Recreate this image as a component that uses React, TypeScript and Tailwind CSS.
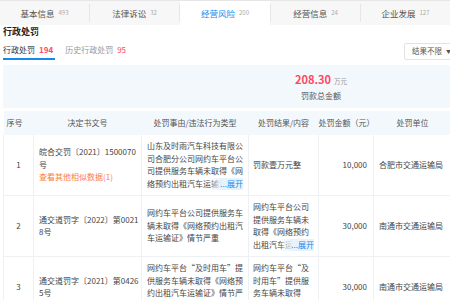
const tabs = [
	{ name: "基本信息", count: 493 },
	{ name: "法律诉讼", count: 32 },
	{ name: "经营风险", count: 200, active: true },
	{ name: "经营信息", count: 24 },
	{ name: "企业发展", count: 127 },
];

type Row = {
	no: number;
	doc: string[];
	similar?: string;
	reason: string;
	reasonMore?: boolean;
	result: string;
	resultMore?: boolean;
	amount: string;
	org: string;
};

const rows: Row[] = [
	{
		no: 1,
		doc: ["皖合交罚〔2021〕1500070", "号"],
		similar: "查看其他相似数据(1)",
		reason:
			"山东及时雨汽车科技有限公司合肥分公司网约车平台公司提供服务车辆未取得《网络预约出租汽车运输证》",
		reasonMore: true,
		result: "罚款壹万元整",
		amount: "10,000",
		org: "合肥市交通运输局",
	},
	{
		no: 2,
		doc: ["通交道罚字〔2022〕第0021", "8号"],
		reason: "网约车平台公司提供服务车辆未取得《网络预约出租汽车运输证》情节严重",
		result: "网约车平台公司提供服务车辆未取得《网络预约出租汽车运输证》情节严重",
		resultMore: true,
		amount: "30,000",
		org: "南通市交通运输局",
	},
	{
		no: 3,
		doc: ["通交道罚字〔2021〕第0426", "5号"],
		reason:
			"网约车平台“及时用车”提供服务车辆未取得《网络预约出租汽车运输证》情节严重",
		reasonMore: true,
		result:
			"网约车平台“及时用车”提供服务车辆未取得《网络预约出租汽车运输证》情节严重",
		resultMore: true,
		amount: "30,000",
		org: "南通市交通运输局",
	},
];

function Clamp({ text, more }: { text: string; more?: boolean }) {
	if (!more) return <div className="break-all">{text}</div>;
	return (
		<div className="relative">
			<div className="line-clamp-4 break-all">{text}</div>
			<span className="absolute right-0 bottom-0 bg-gradient-to-r from-transparent via-[#e6f2fc] via-40% to-[#e6f2fc] pl-[12px] text-[#128bed]">
				...展开
			</span>
		</div>
	);
}

export default function App() {
	return (
		<div className="h-[300px] w-[450px] overflow-hidden bg-white font-['Noto_Sans_CJK_SC',sans-serif] text-[8px] leading-[12.5px] text-[#444]">
			<div className="flex h-[25px] border-t border-[#e6e6e6] bg-[#f7f7f7]">
				{tabs.map((t, i) => (
					<div key={t.name} className="flex items-center">
						{i > 0 && <span className="h-[18px] w-px bg-[#e6e6e6]" />}
						<div
							className={
								t.active
									? "flex h-[24px] w-[90px] items-center justify-center gap-[4px] bg-white text-[8.5px] text-[#128bed]"
									: "flex h-[24px] w-[89px] items-center justify-center gap-[4px] text-[8.5px] text-[#555]"
							}
						>
							<span>{t.name}</span>
							<span className="text-[6px] text-[#aaa]">{t.count}</span>
						</div>
					</div>
				))}
			</div>

			<div className="px-[3px]">
				<div className="h-[14px] text-[9px] leading-[14px] font-bold text-[#222]">
					行政处罚
				</div>
				<div className="mt-[4px] flex w-[449px] items-end justify-between">
					<div className="flex items-end gap-[10px]">
						<div className="flex gap-[4px] border-b-2 border-[#128bed] pb-[2px] pr-[2px] text-[#333]">
							<span>行政处罚</span>
							<span className="font-semibold text-[#fd485e]">194</span>
						</div>
						<div className="flex gap-[4px] pb-[4px] text-[#999]">
							<span>历史行政处罚</span>
							<span className="text-[#fd485e]">95</span>
						</div>
					</div>
					<div className="flex h-[17px] w-[48px] items-center gap-[4px] rounded-[2px] border border-[#e3e3e3] pl-[7px] text-[7.5px] text-[#555]">
						<span>结果不限</span>
						<span className="text-[5px]">▼</span>
					</div>
				</div>

				<div className="mt-[5px] h-[43px] w-[448px] bg-[#f3f8fc] pl-[268px] pt-[7px]">
					<div className="w-[100px] text-center">
						<div className="leading-[15px]">
							<span className="text-[11px] font-bold text-[#fd485e]">208.30</span>
							<span className="ml-[3px] text-[6.5px] text-[#999]">万元</span>
						</div>
						<div className="mt-[1px] text-[#555]">罚款总金额</div>
					</div>
				</div>

				<table className="mt-[3px] w-[448px] table-fixed border-collapse">
					<colgroup>
						<col className="w-[30px]" />
						<col className="w-[108px]" />
						<col className="w-[107px]" />
						<col className="w-[70px]" />
						<col className="w-[55px]" />
						<col className="w-[78px]" />
					</colgroup>
					<thead>
						<tr className="h-[24px] bg-[#f3f8fc] text-[#555]">
							<th className="pl-[3px] text-left font-normal">序号</th>
							<th className="font-normal">决定书文号</th>
							<th className="font-normal">处罚事由/违法行为类型</th>
							<th className="font-normal">处罚结果/内容</th>
							<th className="font-normal">处罚金额（元）</th>
							<th className="font-normal">处罚单位</th>
						</tr>
					</thead>
					<tbody>
						{rows.map((r) => (
							<tr key={r.no} className="border-b border-[#eef1f4]">
								<td className="border-x border-[#eef1f4] text-center">{r.no}</td>
								<td className="border-r border-[#eef1f4] py-[5px] pr-[2px] pl-[5px]">
									{r.doc.map((line) => (
										<div key={line} className="whitespace-nowrap">
											{line}
										</div>
									))}
									{r.similar && <div className="text-[#fa7d3c]">{r.similar}</div>}
								</td>
								<td className="border-r border-[#eef1f4] px-[5px] py-[5px]">
									<Clamp text={r.reason} more={r.reasonMore} />
								</td>
								<td className="border-r border-[#eef1f4] px-[4px] py-[5px]">
									<Clamp text={r.result} more={r.resultMore} />
								</td>
								<td className="border-r border-[#eef1f4] pr-[6px] text-right">{r.amount}</td>
								<td className="border-r border-[#eef1f4] pl-[5px]">{r.org}</td>
							</tr>
						))}
					</tbody>
				</table>
			</div>
		</div>
	);
}
